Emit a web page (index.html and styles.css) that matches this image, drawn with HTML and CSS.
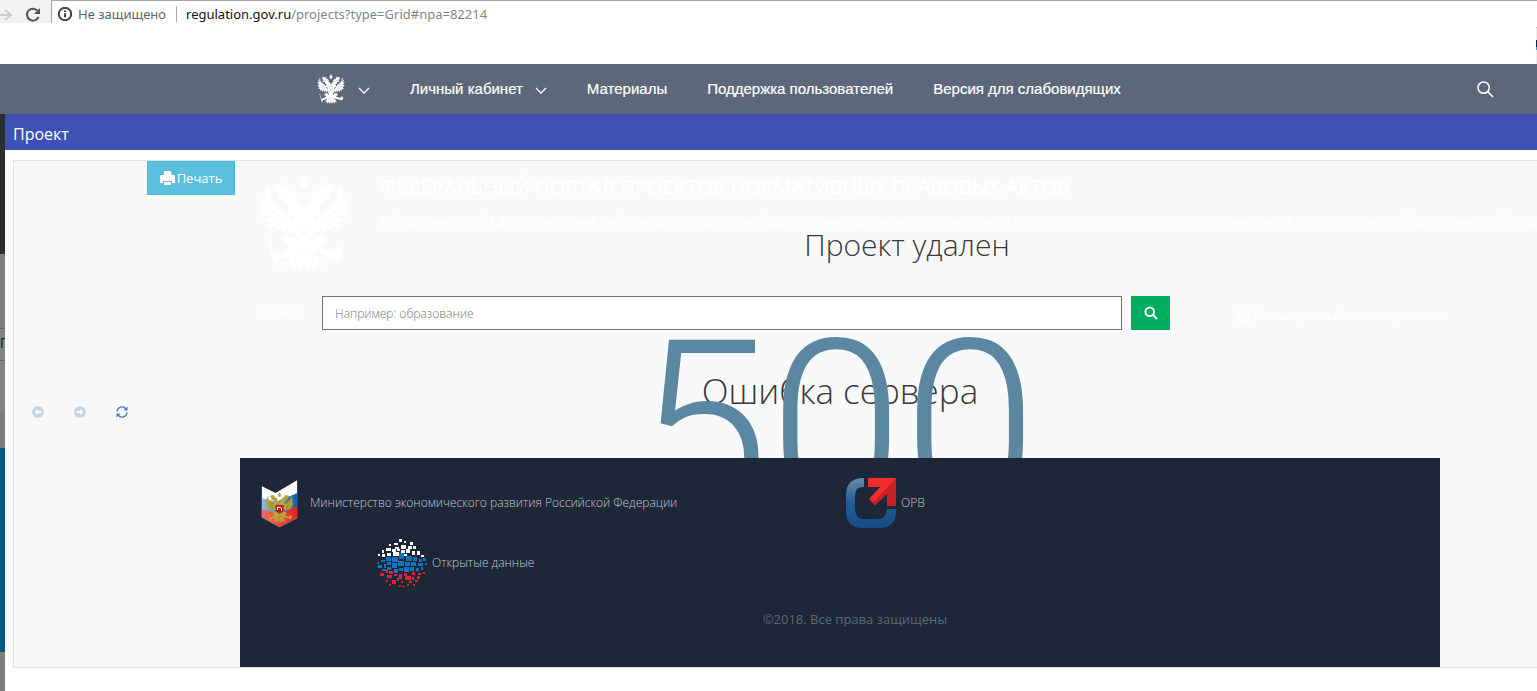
FILE: index.html
```html
<!DOCTYPE html>
<html lang="ru">
<head>
<meta charset="utf-8">
<title>Проект</title>
<link rel="stylesheet" href="styles.css">
</head>
<body>
<svg class="defs" aria-hidden="true">
  <symbol id="eagle" viewBox="0 0 88 96">
    <path d="M39 8l3-3 1-4h2l1 4 3 3-2 7h-6z"/>
    <path d="M17 17l-3-7 4 2 2-4 3 3 3-3 1 4 3-1-2 6 5-1 4 4-1 5 5 3 3 7V47l-8 4-3-9-7-2 4-6-6-5-1-5-8 2 5-5z"/>
    <path d="M71 17l3-7-4 2-2-4-3 3-3-3-1 4-3-1 2 6-5-1-4 4 1 5-5 3-3 7V47l8 4 3-9 7-2-4-6 6-5 1-5 8 2-5-5z"/>
    <path d="M7 9l4 15 13 11 10 16-4 7-3-4-3 4-3-5-5 4-1-5-7 1 2-5-8-2 5-4-7-6 6-2-6-8 6 1-4-9 7 4-5-10 7 6z"/>
    <path d="M81 9l-4 15-13 11-10 16 4 7 3-4 3 4 3-5 5 4 1-5 7 1-2-5 8-2-5-4 7-6-6-2 6-8-6 1 4-9-7 4 5-10-7 6z"/>
    <path d="M33 36q11-5 22 0v20q-3 8-11 11-8-3-11-11z" />
    <path d="M39 64h10l4 9 10 19-6-3-2 5-5-5-2 6-4-5-4 5-2-6-5 5-2-5-6 3 10-19z"/>
    <path d="M34 62l-7-1-5 5 7 6-15 8-6-17-1 1 6 20 2 8 3-8 19-6 4-5z"/>
    <path d="M54 62l7-1 5 5-6 6 13 5 3-5 6 1 1 6-5 5-6-2-16-4-7-7z"/>
    <path class="cut" d="M37 40h14M38 44l5 4 7-3M38 55l6-5 6 6M44 49v12M21 20l7 2M67 20l-7 2M8 24l16 14M7 33l17 11M8 41l17 7M14 49l14 4M80 24L64 38M81 33L64 44M80 41l-17 7M74 49l-14 4M44 73v19M39 75l-6 15M49 75l6 15"/>
  </symbol>
</svg>

<header class="browser">
  <div class="browser-tools">
    <svg class="forward" viewBox="0 0 12 14"><path d="M0 7h11M5 2l6 5-6 5"/></svg>
    <svg class="reload" viewBox="0 0 16 16"><path d="M13.5 10A6 6 0 1 1 12.600 3.800"/><path class="solid" d="M15 1v6H9z"/></svg>
  </div>
  <div class="address">
    <svg class="info" viewBox="0 0 14 14"><circle cx="7" cy="7" r="6.200"/><path d="M7 6.200v4M7 3.500v1.400"/></svg>
    <span class="security">Не защищено</span>
    <span class="url"><b>regulation.gov.ru</b>/projects?type=Grid#npa=82214</span>
  </div>
</header>
<div class="spacer"><span class="edge"></span></div>

<nav class="topnav">
  <a class="brand" href="#" aria-label="Главная">
    <svg class="brand-eagle"><use href="#eagle"/></svg>
    <svg class="chevron" viewBox="0 0 12 7"><path d="M1 1l5 5 5-5"/></svg>
  </a>
  <a href="#">Личный кабинет
    <svg class="chevron" viewBox="0 0 12 7"><path d="M1 1l5 5 5-5"/></svg>
  </a>
  <a href="#">Материалы</a>
  <a href="#">Поддержка пользователей</a>
  <a href="#">Версия для слабовидящих</a>
  <button class="nav-search" aria-label="Поиск по сайту"><svg viewBox="0 0 18 18"><circle cx="7" cy="7" r="6"/><path d="M11 11l6 6"/></svg></button>
</nav>

<div class="stage">
  <div class="backdrop"><i class="photo"></i><i class="grid"><span>П</span></i><i class="blue"></i></div>
  <main class="modal">
    <h1 class="modal-title">Проект</h1>
    <section class="panel">
      <div class="tools">
        <div class="history">
          <button class="tool" disabled aria-label="Назад"><svg viewBox="0 0 12 12"><circle cx="6" cy="6" r="6"/><path class="arrow" d="M2.500 6L6 3v2h3.500v2H6v2z"/></svg></button>
          <button class="tool" disabled aria-label="Вперед"><svg viewBox="0 0 12 12"><circle cx="6" cy="6" r="6"/><path class="arrow" d="M9.500 6L6 3v2H2.500v2H6v2z"/></svg></button>
          <button class="tool refresh" aria-label="Обновить"><svg viewBox="0 0 12 12"><path class="line" d="M1 5.500A5 5 0 0 1 10 3M11 6.500A5 5 0 0 1 2 9"/><path d="M11.500.5v4H7.500zM.5 11.500v-4h4z"/></svg></button>
        </div>
        <button class="print"><svg viewBox="0 0 15 14"><path d="M4 0h6l1.500 1.500V4H14l1 1v7h-3v-2H3v2H0V5l1-1h3zM4 11h7v3H4z"/></svg>Печать</button>
      </div>

      <div class="page">
        <div class="portal">
          <svg class="portal-eagle"><use href="#eagle"/></svg>
          <div>
            <h2>ФЕДЕРАЛЬНЫЙ ПОРТАЛ ПРОЕКТОВ НОРМАТИВНЫХ ПРАВОВЫХ АКТОВ</h2>
            <p>Официальный сайт для размещения информации о подготовке федеральными органами исполнительной власти проектов нормативных правовых актов и результатах их общественного обсуждения</p>
          </div>
        </div>
        <form class="search">
          <label for="q">Поиск:</label>
          <input id="q" type="text" placeholder="Например: образование">
          <button type="button" class="go" aria-label="Найти"><svg viewBox="0 0 14 14"><circle cx="5.700" cy="5.700" r="4.300"/><path d="M9 9l4 4"/></svg></button>
          <a href="#"><svg viewBox="0 0 12 14"><path d="M1 1h7l3 3v9H1zM3 6h6M3 8h6M3 10h6"/></svg>Расширенный поиск проектов</a>
        </form>
        <p class="deleted">Проект удален</p>
        <p class="server">Ошибка сервера</p>
        <p class="code">500</p>
        <footer class="footer">
          <div class="links">
            <a class="ministry" href="#">
              <svg viewBox="0 0 36 47">
                <defs>
                  <clipPath id="shield"><path d="M0 6l14 7L36 0v38l-18 9L0 37z"/></clipPath>
                  <linearGradient id="b"><stop offset="0" stop-color="#91bce5"/><stop offset="1" stop-color="#075fb5"/></linearGradient>
                  <linearGradient id="r"><stop offset="0" stop-color="#f06c5e"/><stop offset="1" stop-color="#e52222"/></linearGradient>
                </defs>
                <g clip-path="url(#shield)"><path fill="#fff" d="M0 0h36v47H0z"/><path fill="url(#b)" d="M0 18l14 4 22-9v34H0z"/><path fill="url(#r)" d="M0 29l17 5 19-8v21H0z"/></g>
                <svg class="gold-eagle" x="3" y="12" width="30" height="31"><use href="#eagle"/></svg>
                <path fill="#b42020" d="M14 25h8v6l-4 3-4-3z"/><path d="M16 30v-3l4 1v3" fill="none" stroke="#eed"/>
              </svg>
              Министерство экономического развития Российской Федерации</a>
            <a class="orv" href="#">
              <svg viewBox="0 0 50 50">
                <defs><linearGradient id="o" x2="0" y2="1"><stop offset="0" stop-color="#668cae"/><stop offset=".5" stop-color="#205d95"/><stop offset="1" stop-color="#174b86"/></linearGradient></defs>
                <path fill="url(#o)" d="M18 0v9h-1q-8 0-8 9v13q0 10 9 10h14q8 0 9-10h9v2q0 17-17 17H17Q0 50 0 33V17Q0 0 18 0z"/>
                <path fill="#f12e2b" d="M22 0h28v28h-9V16L29 27l-6-6L34 9H22z"/><path fill="#c6202a" d="M50 0v28h-9V16L29 27l-2-2z"/>
              </svg>
              ОРВ</a>
            <a class="open" href="#">
              <svg viewBox="0 0 50 48">
                <path fill="#fff" d="M22 0h3v3h-3zM27 2h2v2h-2zM17 4h4v2h-4zM33 3h3v3h-3zM12 5h2v2h-2zM24 6h5v4h-5zM31 7h4v3h-4zM18 8h4v2h-4zM9 9h5v3H9zM15 10h4v3h-4zM20 10h3v2h-3zM24 11h4v3h-4zM29 10h4v4h-4zM36 7h3v3h-3zM35 12h3v4h-3zM40 12h3v4h-3zM16 13h6v4h-6zM10 14h4v3h-4zM5 11h2v3H5zM1 15h2v2H1zM5 15h3v3H5zM44 16h3v2h-3zM27 15h3v2h-3z"/>
                <path fill="#0c75bb" d="M22 14h5v6h-5zM15 18h6v5h-6zM9 18h5v4H9zM29 17h6v5h-6zM36 18h4v4h-4zM42 20h3v3h-3zM46 19h3v3h-3zM4 21h4v2H4zM0 23h2v2H0zM10 23h4v3h-4zM15 24h5v5h-5zM21 22h6v5h-6zM28 23h5v4h-5zM34 23h5v4h-5zM41 24h5v3h-5zM48 24h2v2h-2zM1 26h4v3H1zM7 25h2v4H7zM10 28h4v3h-4zM17 30h4v4h-4zM22 29h4v3h-4zM27 28h5v5h-5zM33 28h4v4h-4zM39 29h3v3h-3zM44 28h2v3h-2zM5 30h4v2H5z"/>
                <path fill="#e01f32" d="M3 34h4v3H3zM9 31h2v3H9zM12 32h4v3h-4zM10 36h5v3h-5zM17 35h3v2h-3zM22 35h3v5h-3zM27 34h3v3h-3zM28 37h6v4h-6zM35 33h3v3h-3zM41 34h3v2h-3zM46 33h2v2h-2zM40 37h3v3h-3zM35 38h2v3h-2zM20 39h2v3h-2zM15 41h4v4h-4zM9 41h2v2H9zM24 42h2v2h-2zM32 42h3v2h-3zM38 41h3v2h-3zM12 45h2v2h-2zM22 46h2v2h-2zM25 47h3v1h-3zM30 45h2v2h-2zM36 45h2v2h-2z"/>
              </svg>
              Открытые данные</a>
          </div>
          <p class="copy">©2018. Все права защищены</p>
        </footer>
      </div>
    </section>
  </main>
</div>
</body>
</html>
```
FILE: styles.css
```css
* { box-sizing: border-box; }
body {
  margin: 0;
  min-height: 100vh;
  display: flex;
  flex-direction: column;
  overflow-x: hidden;
  background: #fff;
  font-family: "Open Sans", "Noto Sans", sans-serif;
  font-weight: 300;
}
h1, h2, p { margin: 0; font-weight: inherit; }
a { color: inherit; text-decoration: none; }
button { border: 0; padding: 0; background: none; font: inherit; }
svg { display: block; flex: none; fill: currentColor; }
.defs { position: absolute; width: 0; height: 0; }
.cut { fill: none; stroke: var(--cut, #5c6779); stroke-width: 1; }

.browser { display: flex; height: 23px; font: 14px/20px "Noto Sans", sans-serif; color: #5f6368; }
.browser-tools { display: flex; align-items: center; gap: 13px; width: 51px; padding-top: 6px; background: #f2f2f2; }
.forward { width: 12px; height: 14px; fill: none; stroke: #ccc; stroke-width: 2; }
.reload { width: 16px; height: 16px; fill: none; stroke: #555; stroke-width: 2; }
.solid { fill: #555; stroke: none; }
.address { flex: 1; display: flex; align-items: center; padding: 4px 0 0 6px; border-top: 1px solid #a5a5a5; border-left: 1px solid #a5a5a5; }
.info { width: 14px; height: 14px; fill: none; stroke: #444; stroke-width: 2; }
.security { margin-left: 6px; padding-right: 10px; border-right: 1px solid #aaa; line-height: 16px; font-size: 13px; }
.url { margin-left: 9px; color: #80868b; font-size: 13px; }
.url b { font-weight: 400; color: #111; }
.spacer { display: flex; justify-content: flex-end; align-items: flex-end; height: 41px; }
.edge { width: 1px; height: 37px; background: linear-gradient(#bbb 1px, #eee 1px 13px, #00285c 13px 20px, #38a6d8 20px 23px, #eee 23px); }

.topnav { display: flex; align-items: center; gap: 40px; height: 50px; padding: 0 43px 0 316px; background: #5c6779; color: #fff; font: 15px/20px "Liberation Sans", Arial, sans-serif; -webkit-text-stroke: 0.2px #fff; }
.topnav a { display: flex; align-items: center; gap: 12px; white-space: nowrap; }
.brand { --cut: #8a93a1; }
.brand-eagle { width: 30px; height: 30px; }
.chevron { width: 12px; height: 7px; margin-top: 3px; fill: none; stroke: #fff; stroke-width: 1.300; }
.nav-search { margin-left: auto; color: #fff; }
.nav-search svg { width: 17px; height: 17px; fill: none; stroke: #fff; stroke-width: 1.600; }

.stage { flex: 1; display: flex; }
.backdrop { width: 5px; display: flex; flex-direction: column; background: #7d7d7d; overflow: hidden; }
.photo { height: 140px; background: #2a2f36; }
.grid { height: 194px; padding-top: 74px; border-bottom: 36px solid #7d7d7d; background: linear-gradient(#7f7f7f 74px, #666 74px 75px, #858585 75px 106px, #666 106px 107px, #858585 107px); font: 14px/30px "Liberation Sans", Arial, sans-serif; color: #222; }
.blue { height: 204px; background: #005a80; }
.modal { flex: 1; min-width: 0; }
.modal-title { padding: 8px 8px 4px; background: #3f51b5; color: #fff; font-size: 16px; line-height: 24px; font-weight: 400; }
.panel { --cut: #f9f9f9; display: grid; grid-template-columns: 226px minmax(0, 1200px); margin: 10px 0 0 8px; border: 1px solid #e2e2e2; border-right: 0; background: #f9f9f9; overflow: hidden; }
.tools { display: flex; justify-content: space-between; padding-right: 5px; }
.history { display: flex; align-items: center; gap: 30px; padding-left: 18px; margin-bottom: 4px; }
.tool { color: #c3d8e6; }
.tool svg { width: 12px; height: 12px; }
.arrow { fill: #fff; }
.refresh { color: #3c7fc0; }
.line { fill: none; stroke: #3c7fc0; stroke-width: 1.300; }
.print { display: flex; align-items: center; justify-content: center; align-self: flex-start; gap: 2px; width: 88px; height: 34px; border: 1px solid #4cb5cf; background: #5bc0de; color: #fff; font-size: 13px; font-weight: 400; }
.print svg { width: 15px; height: 14px; }

.page { position: relative; }
.portal { display: flex; gap: 32px; height: 135px; padding: 14px 0 0 20px; color: #fff; white-space: nowrap; }
.portal-eagle { width: 88px; height: 96px; }
.portal h2 { font-size: 20px; line-height: 24px; font-weight: 400; }
.portal p { margin-top: 12px; font-size: 12px; line-height: 20px; font-weight: 400; }
.search { display: flex; align-items: center; padding-left: 20px; height: 34px; color: #fff; font-size: 13px; font-weight: 400; white-space: nowrap; }
.search label { flex: none; width: 62px; }
.search input { flex: none; width: 800px; height: 34px; padding: 0 12px; border: 1px solid #70757c; background: #fff; font: 300 12px "Open Sans", sans-serif; color: #444; }
.search input::placeholder { color: #777; }
.go { flex: none; display: grid; place-items: center; width: 39px; height: 34px; margin-left: 9px; background: #00ad5f; }
.go svg { width: 14px; height: 14px; fill: none; stroke: #fff; stroke-width: 2; }
.search a { display: flex; flex: none; align-items: center; gap: 4px; margin-left: 68px; padding-top: 4px; }
.search a svg { width: 12px; height: 14px; fill: none; stroke: #fff; }

.deleted, .server, .code { position: absolute; color: #3a3a3a; white-space: nowrap; transform: translateX(-50%); }
.deleted { left: 667px; top: 64px; font-size: 30px; line-height: 40px; }
.server { left: 600px; top: 205px; font-size: 35px; line-height: 50px; }
.code { left: 596px; top: 118px; font-family: Roboto, sans-serif; font-size: 242px; line-height: 300px; color: #5b87a2; }

.footer { position: relative; margin-top: 128px; padding: 20px 20px 36px; background: #1d2738; color: #c4c8ce; font-size: 12px; }
.links { display: grid; grid-template-columns: 586px 1fr; row-gap: 11px; }
.links a { display: flex; align-items: center; line-height: 20px; }
.ministry { --cut: #6e5f2a; gap: 12px; padding-left: 1px; }
.ministry > svg { width: 37px; height: 47px; }
.gold-eagle { color: #bda637; }
.orv { gap: 5px; }
.orv svg { width: 50px; height: 50px; }
.open { gap: 5px; padding-left: 117px; }
.open svg { width: 50px; height: 48px; }
.copy { margin-top: 20px; padding-left: 30px; text-align: center; line-height: 24px; font-size: 13px; font-weight: 400; color: #5f6876; }
```
